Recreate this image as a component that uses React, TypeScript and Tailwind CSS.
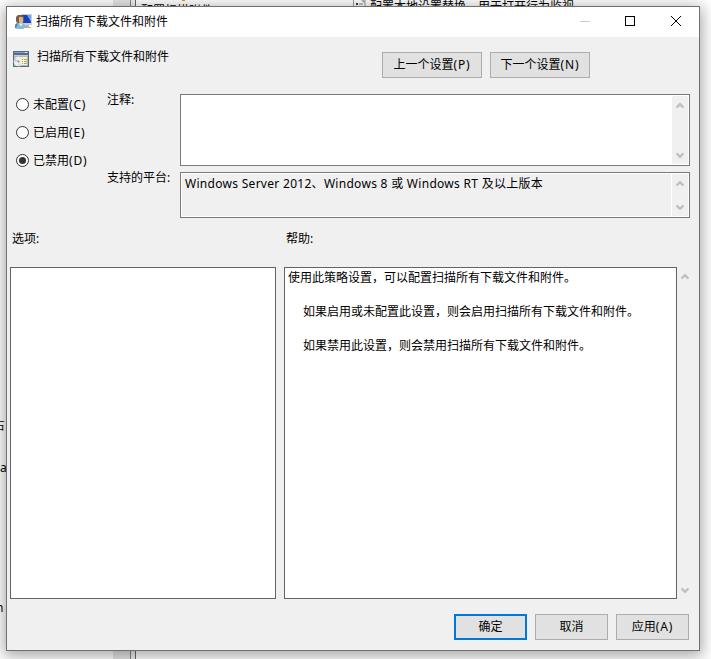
import React, { useState } from "react";
import clsx from "clsx";

const states = [
  { id: "none", label: "未配置", hotkey: "(C)" },
  { id: "enabled", label: "已启用", hotkey: "(E)" },
  { id: "disabled", label: "已禁用", hotkey: "(D)" },
];

interface ButtonProps {
  label: string;
  hotkey?: string;
  primary?: boolean;
  className?: string;
}

const Button = ({ label, hotkey, primary, className }: ButtonProps) => (
  <button
    className={clsx(
      "flex h-[26px] items-center justify-center bg-[#e1e1e1] pb-px",
      primary ? "border-2 border-[#0078d7]" : "border border-[#adadad]",
      className
    )}
  >
    {label}
    {hotkey && <span className="tracking-[0.9px]">{hotkey}</span>}
  </button>
);

const Chevron = ({ down }: { down?: boolean }) => (
  <svg width="8" height="7" viewBox="0 0 8 7" className={down ? "rotate-180" : ""}>
    <path d="M0.5 5.6 L4 2.1 L7.5 5.6" fill="none" stroke="#bfbfbf" strokeWidth="2.2" />
  </svg>
);

const Scrollbar = ({ className }: { className?: string }) => (
  <div className={clsx("flex shrink-0 flex-col items-center justify-between bg-[#f0f0f0] pr-px", className)}>
    <Chevron />
    <Chevron down />
  </div>
);

const UserMonitorIcon = () => (
  <svg width="17" height="16" viewBox="0 0 17 16">
    <path d="M6 0h11v11H6z" fill="#cfd0c8" />
    <path d="M7 1h9v8H7z" fill="#1440c6" />
    <path d="M12 1h4v7z" fill="#6da3f4" />
    <path d="M10 11h4v2h2v1H9v-1h1z" fill="#b0b2ac" />
    <path d="M1 7V3l2-2h4l2 2v4l-1 2H2z" fill="#7a5f45" />
    <path d="M4 3h3l1 1v4L7 10H5L4 8z" fill="#d9b48f" />
    <path d="M0 14v-3l2-2h6l2 2v3l-2 1H2z" fill="#8ab8da" />
    <path d="M0 11l2-2 1 1-2 4H0z" fill="#4e86b8" />
    <path d="M4 9.500h4l-2 3z" fill="#e3eef6" />
  </svg>
);

const PolicyIcon = () => (
  <svg width="16" height="16" viewBox="0 0 16 16">
    <path d="M0 0h16v16H0z" fill="#467282" />
    <path d="M1 1h14v1H1z" fill="#8e9bb8" />
    <path d="M1 2h14v2H1z" fill="#5f6796" />
    <path d="M12 1h2v1h-2z" fill="#e6e8ef" />
    <path d="M1 4h14v1H1z" fill="#c5cdd1" />
    <path d="M1 5h14v10H1z" fill="#b4b9ba" />
    <circle cx="5.500" cy="10.500" r="4.800" fill="#f1edf2" />
    <path d="M5.500 10.500L2 7.200A4.800 4.800 0 0 0 .7 10.500z" fill="#d5c2df" />
    <path d="M5.500 10.500l3 3.800A4.800 4.800 0 0 1 5.500 15.300z" fill="#d3e6d6" />
    <circle cx="5.500" cy="10.500" r="1.100" fill="#8b8b92" />
    <path d="M8 6h6v8H8z" fill="#fdf3c8" />
    <path d="M9 8h1v1H9zM11 8h3v1h-3zM9 10h1v1H9zM11 10h3v1h-3zM9 12h1v1H9zM11 12h3v1h-3z" fill="#b5a36d" />
  </svg>
);

// Parts of the policy editor that stick out from behind the dialog
const Backdrop = () => (
  <div className="absolute inset-0 overflow-hidden whitespace-nowrap bg-white">
    <div className="absolute inset-y-0 left-[113px] flex w-[23px]">
      <div className="w-[17px] bg-[#e6e6e6]" />
      <div className="w-px bg-[#828790]" />
      <div className="w-[4px] bg-[#f0f0f0]" />
      <div className="w-px bg-[#696969]" />
    </div>
    <span className="absolute top-[2px] left-[141px]">配置扫描附件</span>
    <div className="absolute left-[182px] top-0 h-px w-[3px] bg-[#e8913a]" />
    <svg className="absolute left-[353px] top-0" width="13" height="6" viewBox="0 0 13 6">
      <path d="M.5 0v6M8 0h4v6M10 0v2h2" fill="none" stroke="#9b9b9b" />
      <path d="M3 3h2v2H3z" fill="#333" />
      <path d="M6 4h4" stroke="#7385b5" />
    </svg>
    <span className="absolute -top-[2px] left-[370px]">配置本地设置替换，用于打开行为监视</span>
    <span className="absolute -left-[7px] top-[417px]">占</span>
    <span className="absolute left-0 top-[459px]">a</span>
    <span className="absolute -left-[4px] top-[599px]">n</span>
  </div>
);

const App = () => {
  const [selected, setSelected] = useState("disabled");

  return (
    <div className="relative h-[659px] w-[711px] overflow-hidden p-[6px] font-['Noto_Sans','Noto_Sans_CJK_SC',sans-serif] text-[12px] leading-[17px] text-black">
      <Backdrop />

      <div className="relative flex h-[645px] w-[694px] flex-col border border-[#707070] bg-[#f0f0f0] shadow-[0_3px_14px_2px_rgba(0,0,0,0.35)]">
        {/* Title bar */}
        <div className="flex h-[30px] shrink-0 items-center bg-white pl-2">
          <UserMonitorIcon />
          <span className="ml-1 -mt-px grow">扫描所有下载文件和附件</span>
          <svg width="120" height="30" viewBox="0 0 120 30" fill="none" shapeRendering="crispEdges">
            <path d="M1 14.500h10" stroke="#cccccc" />
            <rect x="46.500" y="9.500" width="9" height="9" stroke="#000" />
            <path d="M92 9l10 10M102 9l-10 10" stroke="#000" shapeRendering="auto" />
          </svg>
        </div>

        {/* Policy name and navigation */}
        <div className="flex h-[57px] shrink-0 items-start pl-[6px] pt-[14px]">
          <PolicyIcon />
          <span className="ml-2 -mt-[3px] w-[345px]">扫描所有下载文件和附件</span>
          <div className="mt-px flex gap-2">
            <Button label="上一个设置" hotkey="(P)" className="w-[100px]" />
            <Button label="下一个设置" hotkey="(N)" className="w-[100px]" />
          </div>
        </div>

        {/* State, comment and supported platforms */}
        <div className="flex h-[124px] shrink-0 pl-[9px]">
          <div className="flex w-[91px] flex-col gap-[11px] pt-[2px]">
            {states.map(state => (
              <button
                key={state.id}
                onClick={() => setSelected(state.id)}
                className="flex h-[17px] items-center text-left"
              >
                <span className="flex size-[13px] shrink-0 items-center justify-center rounded-full border border-[#333] bg-white">
                  {selected === state.id && <span className="size-[7px] rounded-full bg-[#333]" />}
                </span>
                <span className="ml-1 whitespace-nowrap">
                  {state.label}
                  <span className="tracking-[0.8px]">{state.hotkey}</span>
                </span>
              </button>
            ))}
          </div>
          <div className="flex w-[73px] flex-col gap-[61px] -mt-[3px]">
            <span>注释:</span>
            <span className="whitespace-nowrap">支持的平台:</span>
          </div>
          <div className="flex w-[510px] flex-col gap-[6px]">
            <div className="flex h-[72px] justify-end border border-[#7a7a7a] bg-white p-px">
              <Scrollbar className="w-4 pb-[5px] pt-[6px]" />
            </div>
            <div className="flex h-[46px] border border-[#7a7a7a] bg-white p-px">
              <div className="mr-px grow bg-[#f0f0f0] pl-[3px] pt-px tracking-[0.29px]">
                Windows Server 2012、Windows 8 或 Windows RT 及以上版本
              </div>
              <Scrollbar className="w-4 pb-[5px] pt-[6px]" />
            </div>
          </div>
        </div>

        {/* Panel headings */}
        <div className="flex h-[49px] shrink-0 pl-[5px] pt-[12px]">
          <span className="w-[274px]">选项:</span>
          <span>帮助:</span>
        </div>

        {/* Options and help */}
        <div className="flex h-[332px] shrink-0 pl-[3px]">
          <div className="mr-2 w-[266px] border border-[#646464] bg-white" />
          <div className="w-[393px] border border-[#646464] bg-white pl-[3px] pt-px">
            <p>使用此策略设置，可以配置扫描所有下载文件和附件。</p>
            <p className="mt-[17px] pl-[15px]">如果启用或未配置此设置，则会启用扫描所有下载文件和附件。</p>
            <p className="mt-[17px] pl-[15px]">如果禁用此设置，则会禁用扫描所有下载文件和附件。</p>
          </div>
          <Scrollbar className="w-[17px] pb-[5px] pt-[6px]" />
        </div>

        {/* Footer */}
        <div className="flex justify-end gap-2 pr-[10px] pt-[15px]">
          <Button label="确定" primary className="w-[73px]" />
          <Button label="取消" className="w-[73px]" />
          <Button label="应用" hotkey="(A)" className="w-[73px]" />
        </div>
      </div>
    </div>
  );
};

export default App;
